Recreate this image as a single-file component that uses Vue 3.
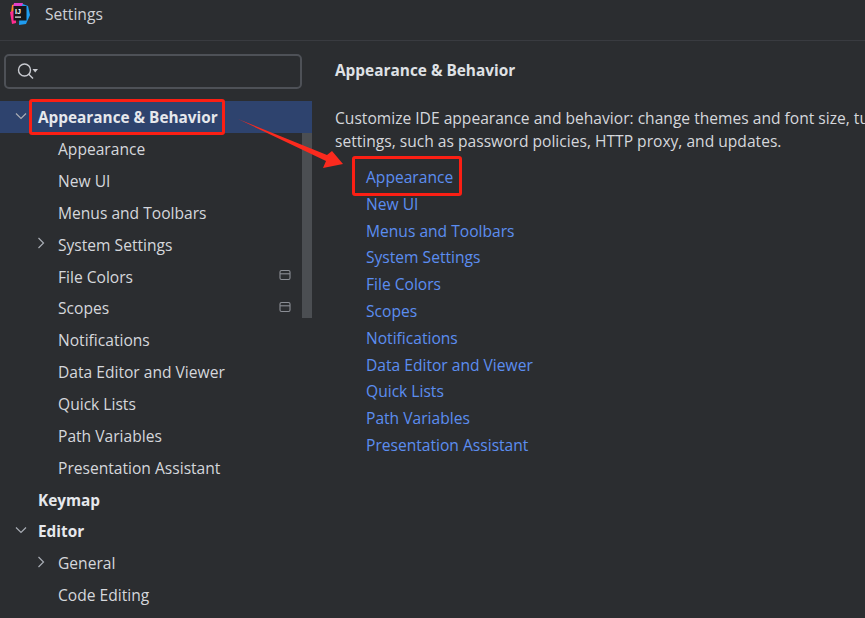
<script setup>
const tree = [
  { label: 'Appearance & Behavior', level: 0, bold: true, arrow: 'down', selected: true },
  { label: 'Appearance', level: 1 },
  { label: 'New UI', level: 1 },
  { label: 'Menus and Toolbars', level: 1 },
  { label: 'System Settings', level: 1, arrow: 'right' },
  { label: 'File Colors', level: 1, badge: true },
  { label: 'Scopes', level: 1, badge: true },
  { label: 'Notifications', level: 1 },
  { label: 'Data Editor and Viewer', level: 1 },
  { label: 'Quick Lists', level: 1 },
  { label: 'Path Variables', level: 1 },
  { label: 'Presentation Assistant', level: 1 },
  { label: 'Keymap', level: 0, bold: true },
  { label: 'Editor', level: 0, bold: true, arrow: 'down' },
  { label: 'General', level: 1, arrow: 'right' },
  { label: 'Code Editing', level: 1 }
]
const links = ['Appearance', 'New UI', 'Menus and Toolbars', 'System Settings', 'File Colors', 'Scopes', 'Notifications', 'Data Editor and Viewer', 'Quick Lists', 'Path Variables', 'Presentation Assistant']
</script>

<template>
  <div class="window">
    <header class="titlebar">
      <svg class="logo" width="22" height="24" viewBox="0 0 22 24">
        <path d="M3 3 L10 1 L9 12 L2 11 Z" fill="#ff8a1f" />
        <path d="M1 10 L7 8 L7 21 L3 22 Z" fill="#ff2d8f" />
        <path d="M11 1 L19 4 L21 13 L17 22 L10 23 Z" fill="#1f9cf0" />
        <path d="M5 1 L14 1 L12 6 L4 6 Z" fill="#e040c8" />
        <rect x="4.5" y="4" width="13" height="14.5" fill="#16161a" />
        <text x="6" y="11.5" class="logo-text">IJ</text>
        <rect x="6" y="14.5" width="6" height="1.2" fill="#e8e8e8" />
      </svg>
      <span class="title">Settings</span>
    </header>
    <div class="body">
      <aside class="sidebar">
        <div class="search">
          <svg width="22" height="18" viewBox="0 0 22 18" fill="none">
            <circle cx="7.5" cy="7" r="6" stroke="#c8cad0" stroke-width="1.4" />
            <path d="M11.8 11.3 L16 15.5" stroke="#c8cad0" stroke-width="1.4" />
            <path d="M15.5 6 H21 L18.2 9.5 Z" fill="#c8cad0" />
          </svg>
        </div>
        <div class="tree">
          <div class="scrollbar"></div>
          <div
            v-for="row in tree"
            :key="row.label"
            class="row"
            :class="{ selected: row.selected, bold: row.bold, child: row.level === 1 }"
          >
            <svg v-if="row.arrow" class="arrow" width="12" height="12" viewBox="0 0 12 12" fill="none">
              <path v-if="row.arrow === 'down'" d="M1 3.5 L6 8.5 L11 3.5" stroke="#a9adb5" stroke-width="1.2" />
              <path v-else d="M3.5 1 L8.5 6 L3.5 11" stroke="#a9adb5" stroke-width="1.2" />
            </svg>
            <span>{{ row.label }}</span>
            <svg v-if="row.badge" class="badge" width="12" height="12" viewBox="0 0 12 12" fill="none">
              <rect x="1" y="1.5" width="10" height="9" rx="1.5" stroke="#8b8e95" stroke-width="1.1" />
              <path d="M1 4.8 H11" stroke="#8b8e95" stroke-width="1.1" />
            </svg>
          </div>
        </div>
      </aside>
      <main class="content">
        <h1 class="heading">Appearance &amp; Behavior</h1>
        <p class="desc">Customize IDE appearance and behavior: change themes and font size, tu<br />settings, such as password policies, HTTP proxy, and updates.</p>
        <ul class="links">
          <li v-for="l in links" :key="l">{{ l }}</li>
        </ul>
      </main>
    </div>
    <div class="mark mark-tree"></div>
    <div class="mark mark-link"></div>
    <svg class="pointer" width="110" height="52" viewBox="0 0 110 52">
      <path d="M0 0 L89 36 L94 32 L105 45 L85 49 L88 42 Z" fill="#fb2a1e" />
    </svg>
  </div>
</template>

<style>
html, body { margin: 0; background: #2b2d30; }
</style>

<style scoped>
.window {
  position: relative;
  width: 865px;
  height: 618px;
  overflow: hidden;
  background: #2b2d30;
  color: #dfe1e5;
  font-family: "Open Sans", "Noto Sans", sans-serif;
  font-size: 15.6px;
}
.titlebar {
  display: flex;
  align-items: center;
  height: 41px;
  padding: 0 0 13px 9px;
  box-sizing: border-box;
  border-bottom: 1px solid #393b40;
}
.logo { flex: none; }
.logo-text { font-size: 7px; font-weight: 700; fill: #fff; font-family: "Liberation Sans", sans-serif; }
.title { margin-left: 14px; font-size: 15.6px; color: #ced0d6; }
.body { display: flex; }
.sidebar { width: 312px; flex: none; }
.search {
  display: flex;
  align-items: center;
  height: 35px;
  width: 298px;
  margin: 13px 0 0 4px;
  padding-left: 11px;
  box-sizing: border-box;
  border: 2px solid #4e5157;
  border-radius: 5px;
}
.tree { position: relative; margin-top: 12px; }
.scrollbar {
  position: absolute;
  right: 0;
  top: 1px;
  width: 10px;
  height: 216px;
  background: rgba(120, 124, 132, 0.42);
}
.row {
  position: relative;
  display: flex;
  align-items: center;
  height: 31.85px;
  padding: 1px 0 0 38px;
  box-sizing: border-box;
}
.row.child { padding-left: 58px; color: #d5d7dc; }
.row.bold { font-weight: 700; font-size: 15.35px; color: #e6e8ec; }
.row.selected { background: #2e436e; }
.arrow { position: absolute; left: 15px; top: 9px; }
.row.child .arrow { left: 35px; }
.badge { position: absolute; left: 279px; top: 9px; }
.content { flex: 1; padding: 18px 0 0 23px; min-width: 0; }
.heading { margin: 0; font-size: 15.4px; line-height: 24px; font-weight: 700; color: #dfe1e5; }
.desc { margin: 24px 0 0; width: 530px; white-space: nowrap; line-height: 23px; color: #d5d7dc; }
.links { list-style: none; margin: 11px 0 0; padding: 0 0 0 31px; color: #5c8df0; }
.links li { height: 26.8px; line-height: 26.8px; }
.mark { position: absolute; border: 3px solid #fb1f14; border-radius: 3px; box-sizing: border-box; }
.mark-tree { left: 29px; top: 99px; width: 196px; height: 36px; }
.mark-link { left: 352px; top: 156px; width: 110px; height: 40px; }
.pointer { position: absolute; left: 238px; top: 119px; }
</style>
